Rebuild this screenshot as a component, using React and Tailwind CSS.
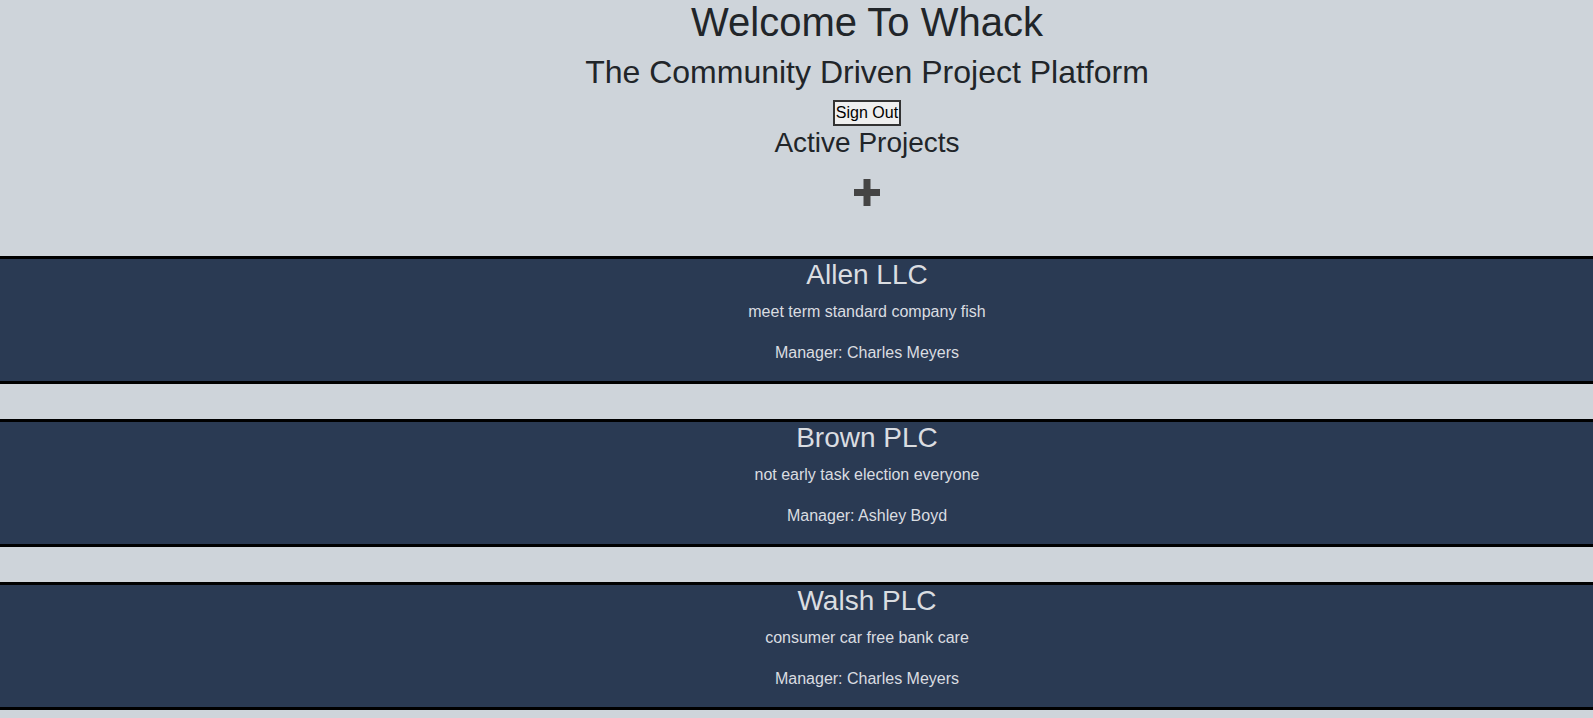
import React from "react";

const projects = [
  { name: "Allen LLC", description: "meet term standard company fish", manager: "Charles Meyers" },
  { name: "Brown PLC", description: "not early task election everyone", manager: "Ashley Boyd" },
  { name: "Walsh PLC", description: "consumer car free bank care", manager: "Charles Meyers" },
];

const PlusIcon = () => (
  <svg width="26" height="27" viewBox="0 0 26 27" fill="#444">
    <rect x="9.5" y="0" width="7" height="27" />
    <rect x="0" y="10" width="26" height="7" />
  </svg>
);

function ProjectCard({ project }) {
  return (
    <div className="w-full h-[128px] pl-[141px] border-y-[3px] border-black bg-[#2a3a53] text-[#dadde1] flex flex-col items-center">
      <h3 className="text-[28px] leading-[32px]">{project.name}</h3>
      <p className="mt-[12px] text-[16px] leading-[18px]">{project.description}</p>
      <p className="mt-[23px] text-[16px] leading-[18px]">Manager: {project.manager}</p>
    </div>
  );
}

export default function App() {
  return (
    <div className="min-h-[718px] bg-[#ced4da] text-[#212529] font-['Liberation_Sans',Arial,sans-serif]">
      {/* HEADER */}
      <div className="pl-[141px] flex flex-col items-center">
        <h1 className="text-[40px] leading-[45px]">Welcome To Whack</h1>
        <h2 className="mt-[9px] text-[32px] leading-[37px]">The Community Driven Project Platform</h2>
        <button className="mt-[9px] h-[26px] px-[1px] border-2 border-[#333] bg-[#efefef] text-black text-[16px] leading-[18px]">
          Sign Out
        </button>
        <h2 className="mt-[1px] text-[28px] leading-[32px]">Active Projects</h2>
        <div className="mt-[20px] mb-[50px]">
          <PlusIcon />
        </div>
      </div>

      {/* PROJECTS */}
      <div className="flex flex-col gap-[35px]">
        {projects.map((p) => (
          <ProjectCard key={p.name} project={p} />
        ))}
      </div>
    </div>
  );
}
